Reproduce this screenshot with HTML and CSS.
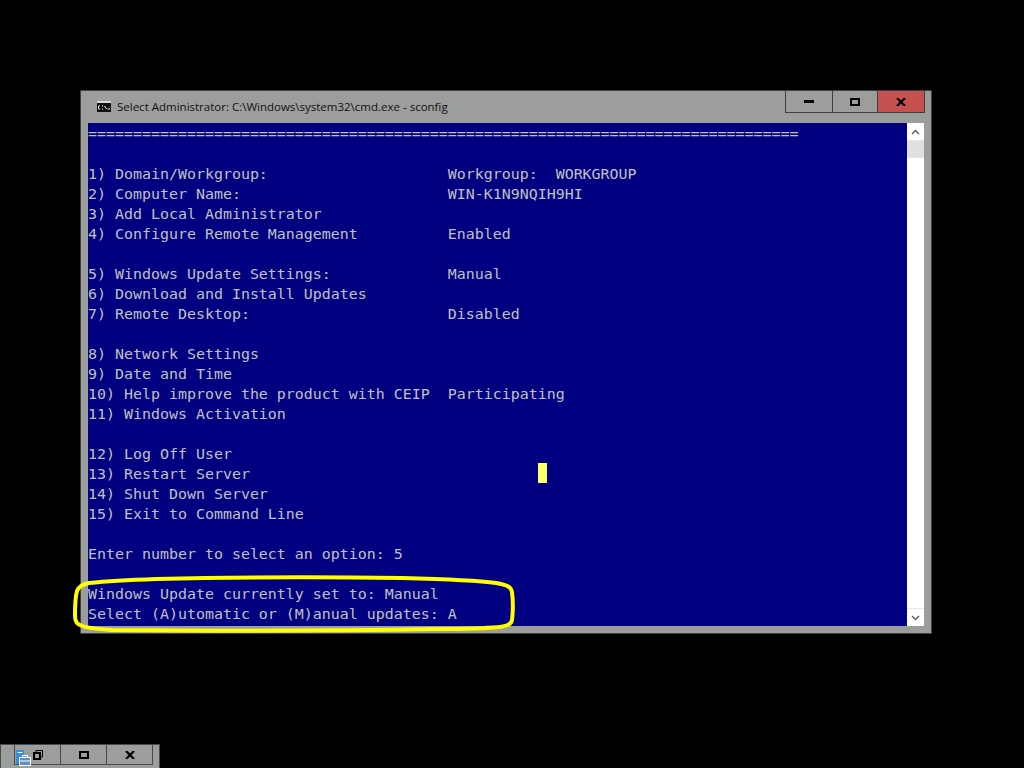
FILE: index.html
```html
<!DOCTYPE html>
<html lang="en">
<head>
<meta charset="utf-8">
<title>sconfig</title>
<link rel="stylesheet" href="styles.css">
</head>
<body>
<div class="window">
  <div class="titlebar">
    <svg class="cmd-icon" width="14" height="11" viewBox="0 0 14 11"><rect width="14" height="11" fill="#111"/><rect x="0" y="0" width="14" height="2" fill="#d8d8d8"/><path d="M3 5H1.500V8H3M5 5h1M5 8h1M7.500 5l2 3M10.500 8h2.500" stroke="#eee" fill="none"/></svg>
    <span class="title">Select Administrator: C:\Windows\system32\cmd.exe - sconfig</span>
    <div class="controls">
      <div class="btn"><svg width="10" height="3" viewBox="0 0 10 3"><rect width="10" height="3" fill="#000"/></svg></div>
      <div class="btn btn-mid"><svg width="10" height="8" viewBox="0 0 10 8"><path d="M1 1h8v6H1z" fill="none" stroke="#000" stroke-width="2"/></svg></div>
      <div class="btn btn-close"><svg width="10" height="8" viewBox="0 0 10 8"><path d="M1 0l8 8M9 0L1 8" stroke="#000" stroke-width="2.200"/></svg></div>
    </div>
  </div>
  <div class="client">
<pre class="console">===============================================================================

1) Domain/Workgroup:                    Workgroup:  WORKGROUP
2) Computer Name:                       WIN-K1N9NQIH9HI
3) Add Local Administrator
4) Configure Remote Management          Enabled

5) Windows Update Settings:             Manual
6) Download and Install Updates
7) Remote Desktop:                      Disabled

8) Network Settings
9) Date and Time
10) Help improve the product with CEIP  Participating
11) Windows Activation

12) Log Off User
13) Restart Server
14) Shut Down Server
15) Exit to Command Line

Enter number to select an option: 5

Windows Update currently set to: Manual
Select (A)utomatic or (M)anual updates: A</pre>
    <div class="scrollbar">
      <div class="arrow"><svg width="9" height="6" viewBox="0 0 9 6"><path d="M1 5l3.500-3.500L8 5" fill="none" stroke="#606060" stroke-width="1.500"/></svg></div>
      <div class="thumb"></div>
      <div class="track"></div>
      <div class="arrow"><svg width="9" height="6" viewBox="0 0 9 6"><path d="M1 1l3.500 3.500L8 1" fill="none" stroke="#606060" stroke-width="1.500"/></svg></div>
    </div>
  </div>
</div>
<div class="cursor"></div>
<svg class="highlight" width="460" height="70" viewBox="0 0 460 70"><path d="M20 13C40 11 60 10 87 9C170 7 260 7 333 8C370 9 405 10 427 13C437 15 442 16 443 22C444 30 444 42 443 50C442 55 437 56 430 57C410 59 390 59 367 59C260 61 140 61 43 60C28 59 18 58 13 56C8 54 6 52 6 46C6 37 6 28 8 21C10 16 14 14 20 13Z" fill="none" stroke="#ffff00" stroke-width="4"/></svg>
<div class="minimized">
  <div class="min-btn">
    <svg class="server-icon" width="16" height="16" viewBox="0 0 16 16"><rect x="1" y="0" width="8" height="14" fill="#2f8fe0"/><rect x="2.500" y="2" width="5" height="1" fill="#fff"/><rect x="4.500" y="7.500" width="11" height="8" fill="#5f8fc0" stroke="#fff"/><path d="M5 11h10" stroke="#fff"/><path d="M7.500 7V5.500h5V7" fill="none" stroke="#fff"/></svg>
    <svg class="restore-icon" width="10" height="10" viewBox="0 0 10 10"><path d="M3 2V.5h6.500V7H8" fill="none" stroke="#000"/><path d="M1 3h6v6H1z" fill="none" stroke="#000" stroke-width="2"/></svg>
  </div>
  <div class="min-btn"><svg width="10" height="8" viewBox="0 0 10 8"><path d="M1 1h8v6H1z" fill="none" stroke="#000" stroke-width="2"/></svg></div>
  <div class="min-btn"><svg width="10" height="8" viewBox="0 0 10 8"><path d="M1 0l8 8M9 0L1 8" stroke="#000" stroke-width="2.200"/></svg></div>
</div>
</body>
</html>
```
FILE: styles.css
```css
html, body {
  margin: 0;
  padding: 0;
  width: 1024px;
  height: 768px;
  background: #000;
  overflow: hidden;
}
.window {
  position: absolute;
  left: 80px;
  top: 90px;
  width: 852px;
  height: 544px;
  box-sizing: border-box;
  background: #9c9e9b;
  border: 1px solid #3f3f3f;
  display: flex;
  flex-direction: column;
  padding: 0 7px 7px 7px;
}
.titlebar {
  height: 32px;
  display: flex;
  align-items: flex-start;
  flex: none;
}
.cmd-icon { margin: 10px 6px 0 9px; flex: none; }
.title {
  font: 11.500px/32px "Open Sans", sans-serif;
  color: #111;
  white-space: nowrap;
}
.controls {
  margin-left: auto;
  margin-right: -1px;
  display: flex;
  height: 22px;
  box-sizing: border-box;
  border: 1px solid #3f3f3f;
  border-top: 0;
}
.btn {
  width: 46px;
  box-sizing: border-box;
  display: flex;
  align-items: center;
  justify-content: center;
}
.btn-mid { border-left: 1px solid #3f3f3f; border-right: 1px solid #3f3f3f; }
.btn-close { background: #c75050; }
.client {
  flex: 1;
  display: flex;
  min-height: 0;
}
.console {
  flex: 1;
  margin: 0;
  padding-top: 1px;
  background: #000080;
  color: #c0c0c0;
  font: 14.950px/20px "DejaVu Sans Mono", monospace;
  overflow: hidden;
}
.scrollbar {
  width: 17px;
  flex: none;
  display: flex;
  flex-direction: column;
  gap: 1px;
  background: #e6e6e6;
}
.arrow {
  height: 17px;
  background: #fff;
  display: flex;
  align-items: center;
  justify-content: center;
  flex: none;
}
.thumb { height: 16px; background: #e0e0e0; flex: none; }
.track { flex: 1; background: #fff; }
.cursor {
  position: absolute;
  left: 538px;
  top: 463px;
  width: 9px;
  height: 20px;
  background: #ffff66;
}
.highlight {
  position: absolute;
  left: 69px;
  top: 570px;
}
.minimized {
  position: absolute;
  left: 0;
  top: 744px;
  width: 160px;
  height: 24px;
  box-sizing: border-box;
  background: #9c9e9b;
  border: 1px solid #4a4a4a;
  border-bottom: 0;
  padding-left: 13px;
  display: flex;
}
.min-btn {
  width: 46px;
  height: 20px;
  box-sizing: border-box;
  border-left: 1px solid #4a4a4a;
  border-bottom: 1px solid #4a4a4a;
  display: flex;
  align-items: center;
  justify-content: center;
  position: relative;
}
.min-btn:last-child { width: 47px; border-right: 1px solid #4a4a4a; }
.server-icon { position: absolute; left: 0; top: 5px; }
.restore-icon { position: absolute; left: 18px; top: 5px; }
```
